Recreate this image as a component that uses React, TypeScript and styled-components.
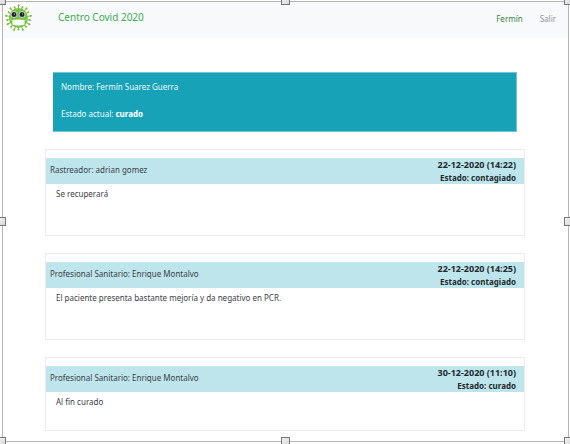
import React from "react";
import styled, { createGlobalStyle } from "styled-components";

const GlobalStyle = createGlobalStyle`
  *, *::before, *::after { box-sizing: border-box; }
  body {
    margin: 0;
    background: #fff;
    color: #3b4145;
    font-family: "Noto Sans", "Open Sans", sans-serif;
    font-size: 8px;
    line-height: 13px;
  }
  h1, h2, p { margin: 0; font: inherit; }
`;

const Frame = styled.div`
  position: relative;
  margin: 1px 1px 2px 2px;
  border: 1px solid #b5b5b5;
`;

type Spot = { $v: "top" | "middle" | "bottom"; $h: "left" | "center" | "right" };

const Handle = styled.span<Spot>`
  position: absolute;
  width: 9px;
  height: 9px;
  border: 1px solid #777;
  background: linear-gradient(135deg, #f2f2f2, #d8d8d8);
  top: ${({ $v }) => ({ top: "-6px", middle: "calc(50% - 5px)", bottom: "calc(100% - 4px)" })[$v]};
  left: ${({ $h }) => ({ left: "-6px", center: "calc(50% - 5px)", right: "calc(100% - 4px)" })[$h]};
`;

const Clip = styled.div`
  overflow: hidden;
`;

const Navbar = styled.header`
  display: flex;
  align-items: flex-start;
  height: 36px;
  padding: 2px 12px 0 2px;
  background: #f8f9fb;
`;

const Logo = styled.svg`
  flex: none;
  width: 27px;
  height: 27px;
  background: #fff;
`;

const Brand = styled.a`
  margin-left: 26px;
  padding-top: 5px;
  color: #3bad50;
  font-size: 10px;
  line-height: 16px;
  text-decoration: none;
`;

const Nav = styled.nav`
  display: flex;
  gap: 17px;
  margin-left: auto;
  padding-top: 8px;
`;

const NavLink = styled.a<{ $active?: boolean }>`
  color: ${({ $active }) => ($active ? "#34843f" : "#909497")};
  text-decoration: none;
`;

const Main = styled.main`
  display: flex;
  flex-direction: column;
  gap: 17px;
  padding: 34px 43px 10px 42px;
`;

const Summary = styled.section`
  display: flex;
  flex-direction: column;
  gap: 14px;
  margin: 0 8px;
  padding: 7px 8px 11px;
  border: 1px solid #6fc6d4;
  border-left: 0;
  background: #18a2b8;
  color: #edf9fb;

  strong { color: #fff; }
`;

const Card = styled.article<{ $short?: boolean }>`
  min-height: ${({ $short }) => ($short ? 74 : 87)}px;
  padding-top: 8px;
  border: 1px solid #ebecee;
`;

const CardHeader = styled.header`
  display: flex;
  align-items: flex-start;
  justify-content: space-between;
  padding: 0 8px 0 4px;
  background: #bee5eb;
`;

const Author = styled.h2`
  && { padding-top: 5px; }
`;

const Status = styled.p`
  display: flex;
  flex-direction: column;
  color: #212b2f;
  font-weight: 700;
  text-align: right;
`;

const DateText = styled.time`
  font-size: 9px;
`;

const Note = styled.p`
  padding: 3px 10px;
`;

const entries = [
  { author: "Rastreador: adrian gomez", date: "22-12-2020 (14:22)", state: "contagiado", note: "Se recuperará" },
  {
    author: "Profesional Sanitario: Enrique Montalvo",
    date: "22-12-2020 (14:25)",
    state: "contagiado",
    note: "El paciente presenta bastante mejoría y da negativo en PCR.",
  },
  { author: "Profesional Sanitario: Enrique Montalvo", date: "30-12-2020 (11:10)", state: "curado", note: "Al fin curado" },
];

const handles: [Spot["$v"], Spot["$h"]][] = [
  ["top", "left"],
  ["top", "center"],
  ["top", "right"],
  ["middle", "left"],
  ["middle", "right"],
  ["bottom", "left"],
  ["bottom", "center"],
  ["bottom", "right"],
];

const spikes = Array.from({ length: 18 }, (_, i) => i * 20);

function VirusLogo() {
  return (
    <Logo viewBox="0 0 54 54" role="img" aria-label="Centro Covid">
      <g stroke="#76bf3f" strokeWidth="2" strokeLinecap="round" fill="#76bf3f">
        {spikes.map((a, i) => (
          <g key={a} transform={`rotate(${a} 27 28)`}>
            <path d={i % 2 ? "M27 12V5" : "M27 12V2"} />
            <circle cx="27" cy={i % 2 ? 5 : 3} r="1" />
          </g>
        ))}
      </g>
      <ellipse cx="27" cy="28" rx="19" ry="20" fill="#78c241" />
      <path d="M9 30L15 33M45 30L39 33" stroke="#d5eac8" strokeWidth="1" />
      <path d="M15 32Q27 30 39 32V41Q27 45 15 41Z" fill="#fff" />
      <circle cx="18" cy="21" r="7" fill="#fff" stroke="#5d9f4a" />
      <circle cx="34" cy="21" r="7" fill="#fff" stroke="#5d9f4a" />
      <circle cx="18" cy="21" r="5" fill="#20252b" />
      <circle cx="34" cy="21" r="5" fill="#20252b" />
      <circle cx="19" cy="20" r="1" fill="#fff" />
      <circle cx="35" cy="20" r="1" fill="#fff" />
    </Logo>
  );
}

export default function App() {
  return (
    <Clip>
      <GlobalStyle />
      <Frame>
        <Navbar>
          <VirusLogo />
          <Brand href="#inicio">Centro Covid 2020</Brand>
          <Nav>
            <NavLink href="#perfil" $active>Fermín</NavLink>
            <NavLink href="#salir">Salir</NavLink>
          </Nav>
        </Navbar>
        <Main>
          <Summary>
            <p>Nombre: Fermín Suarez Guerra</p>
            <p>Estado actual: <strong>curado</strong></p>
          </Summary>
          {entries.map((e, i) => (
            <Card key={e.date} $short={i === entries.length - 1}>
              <CardHeader>
                <Author>{e.author}</Author>
                <Status>
                  <DateText>{e.date}</DateText>
                  <span>Estado: {e.state}</span>
                </Status>
              </CardHeader>
              <Note>{e.note}</Note>
            </Card>
          ))}
        </Main>
        {handles.map(([v, h]) => (
          <Handle key={v + h} $v={v} $h={h} />
        ))}
      </Frame>
    </Clip>
  );
}
